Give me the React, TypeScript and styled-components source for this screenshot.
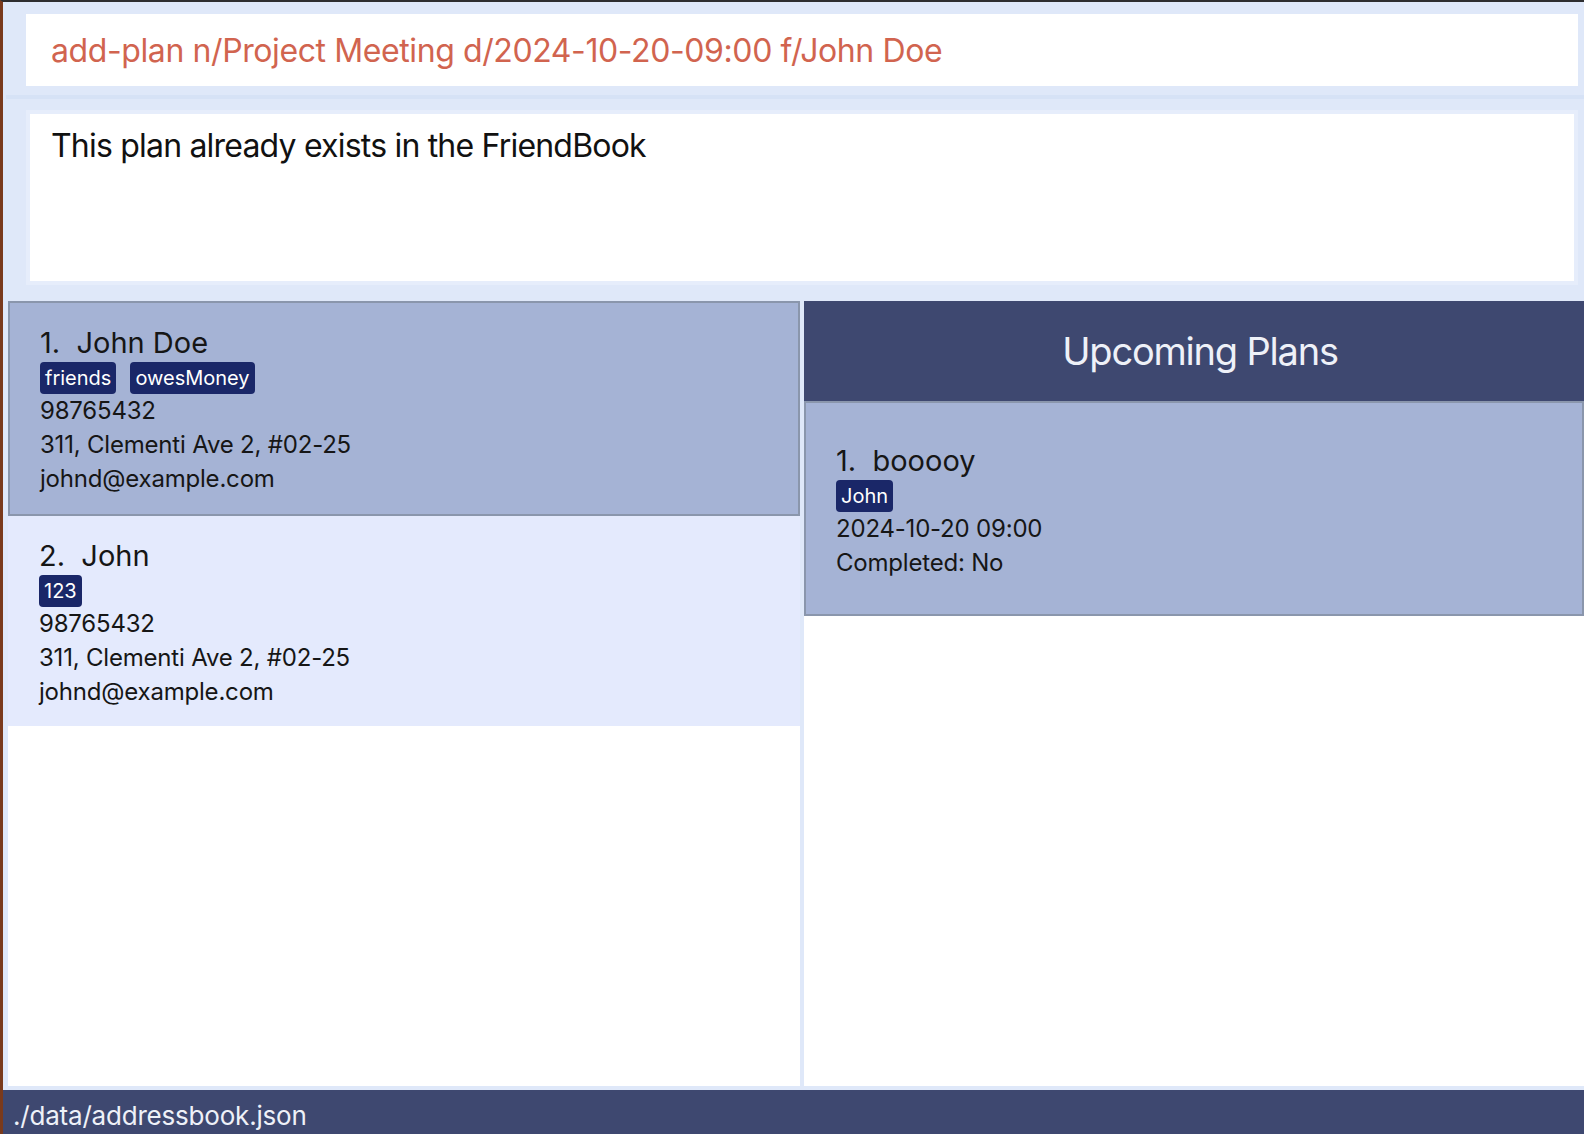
import React from "react";
import styled, { createGlobalStyle } from "styled-components";

const GlobalStyle = createGlobalStyle`
  html, body {
    margin: 0;
    padding: 0;
    background: #7a3a1c;
  }
  * { box-sizing: border-box; }
`;

const FONT = `Inter, "Noto Sans", "DejaVu Sans", sans-serif`;

const Window = styled.div`
  width: 1584px;
  height: 1134px;
  border-top: 2px solid #2e2e30;
  border-left: 3px solid #7a3a1c;
  background: #dfe8f9;
  display: flex;
  flex-direction: column;
  overflow: hidden;
  font-family: ${FONT};
`;

const CommandSection = styled.div`
  padding: 12px 6px 9px 20px;
  border-bottom: 4px solid #d6e2f6;
  margin-left: 3px;
`;

const CommandBox = styled.div`
  height: 72px;
  background: #ffffff;
  display: flex;
  align-items: center;
  padding-left: 25px;
  font-size: 32px;
  color: #d1644f;
  white-space: nowrap;
  letter-spacing: -0.4px;
`;

const ResultSection = styled.div`
  padding: 11px 6px 16px 23px;
`;

const ResultBox = styled.div`
  height: 175px;
  background: #ffffff;
  border: 4px solid #e6edfb;
  padding: 12px 0 0 21px;
  font-size: 32px;
  color: #111111;
  letter-spacing: -0.8px;
`;

const Main = styled.div`
  flex: 1;
  display: flex;
  gap: 4px;
  padding-left: 5px;
  padding-bottom: 4px;
  min-height: 0;
`;

const ListPanel = styled.div<{ $width?: number }>`
  background: #ffffff;
  display: flex;
  flex-direction: column;
  ${(p) => (p.$width ? `width: ${p.$width}px;` : "flex: 1;")}
`;

const PanelHeader = styled.div`
  height: 100px;
  background: #3e4870;
  color: #eef1f8;
  font-size: 38px;
  display: flex;
  align-items: center;
  justify-content: center;
  padding-left: 12px;
  letter-spacing: -1.2px;
`;

const Card = styled.div<{ $selected?: boolean; $pt: number; $pb: number }>`
  display: flex;
  flex-direction: column;
  align-items: flex-start;
  background: ${(p) => (p.$selected ? "#a5b3d5" : "#e4eafd")};
  border: ${(p) => (p.$selected ? "2px solid #8a96ac" : "none")};
  padding: ${(p) => p.$pt}px 0 ${(p) => p.$pb}px
    ${(p) => (p.$selected ? 30 : 31)}px;
  color: #161616;
`;

const Name = styled.div`
  font-size: 29px;
  line-height: 36px;
`;

const Tags = styled.div`
  display: flex;
  gap: 14px;
  margin: 1px 0 0;
`;

const Tag = styled.span`
  background: #1a2768;
  color: #ffffff;
  font-size: 20px;
  line-height: 32px;
  height: 32px;
  padding: 0 5px;
  border-radius: 4px;
`;

const Field = styled.div`
  font-size: 24px;
  line-height: 34px;
  letter-spacing: -0.2px;
`;

const StatusBar = styled.div`
  height: 44px;
  background: #3e4870;
  color: #eef1f8;
  font-size: 26px;
  padding: 11px 0 0 10px;
  line-height: 30px;
  overflow: hidden;
  white-space: nowrap;
  letter-spacing: -0.2px;
`;

type Person = {
  name: string;
  tags: string[];
  phone: string;
  address: string;
  email: string;
};

const persons: Person[] = [
  {
    name: "John Doe",
    tags: ["friends", "owesMoney"],
    phone: "98765432",
    address: "311, Clementi Ave 2, #02-25",
    email: "johnd@example.com",
  },
  {
    name: "John",
    tags: ["123"],
    phone: "98765432",
    address: "311, Clementi Ave 2, #02-25",
    email: "johnd@example.com",
  },
];

export default function App() {
  return (
    <>
      <GlobalStyle />
      <Window>
        <CommandSection>
          <CommandBox>add-plan n/Project Meeting d/2024-10-20-09:00 f/John Doe</CommandBox>
        </CommandSection>
        <ResultSection>
          <ResultBox>This plan already exists in the FriendBook</ResultBox>
        </ResultSection>
        <Main>
          <ListPanel $width={792}>
            {persons.map((p, i) => (
              <Card key={i} $selected={i === 0} $pt={22} $pb={i === 0 ? 18 : 17}>
                <Name>
                  {i + 1}.&nbsp; {p.name}
                </Name>
                <Tags>
                  {p.tags.map((t) => (
                    <Tag key={t}>{t}</Tag>
                  ))}
                </Tags>
                <Field>{p.phone}</Field>
                <Field>{p.address}</Field>
                <Field>{p.email}</Field>
              </Card>
            ))}
          </ListPanel>
          <ListPanel>
            <PanelHeader>Upcoming Plans</PanelHeader>
            <Card $selected $pt={40} $pb={34}>
              <Name>1.&nbsp; booooy</Name>
              <Tags>
                <Tag>John</Tag>
              </Tags>
              <Field>2024-10-20 09:00</Field>
              <Field>Completed: No</Field>
            </Card>
          </ListPanel>
        </Main>
        <StatusBar>./data/addressbook.json</StatusBar>
      </Window>
    </>
  );
}
